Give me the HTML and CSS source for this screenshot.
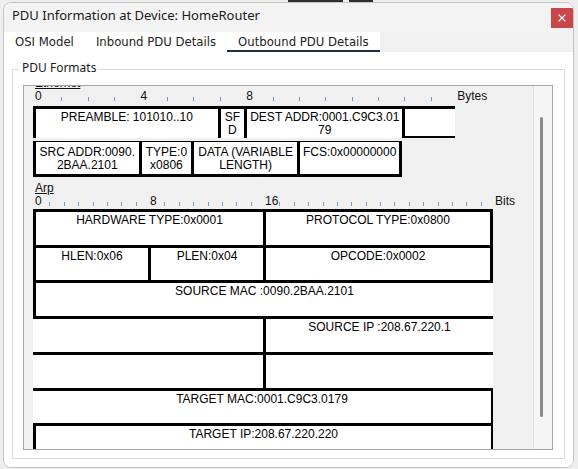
FILE: index.html
```html
<!DOCTYPE html>
<html>
<head>
<meta charset="utf-8">
<title>PDU Information</title>
<link rel="stylesheet" href="styles.css">
</head>
<body>
<div class="dialog">
  <div class="titlebar">
    <span class="title">PDU Information at Device: HomeRouter</span>
    <div class="close"><svg width="8" height="8" viewBox="0 0 8 8"><path d="M0.6 0.6L7.4 7.4M7.4 0.6L0.6 7.4" stroke="#fff" stroke-width="1.3" fill="none"/></svg></div>
  </div>
  <div class="tabbar">
    <div class="tabs">
      <div class="tab">OSI Model</div>
      <div class="tab">Inbound PDU Details</div>
      <div class="tab active">Outbound PDU Details</div>
    </div>
  </div>
  <div class="content">
    <fieldset class="group">
      <legend>PDU Formats</legend>
      <div class="panel">
        <div class="viewport">
          <div class="seclabel first">Ethernet</div>
          <div class="ruler r-eth">
            <span class="u">0</span><span class="u"><i></i></span><span class="u"><i></i></span><span class="u"><i></i></span>
            <span class="u">4</span><span class="u"><i></i></span><span class="u"><i></i></span><span class="u"><i></i></span>
            <span class="u">8</span><span class="u"><i></i></span><span class="u"><i></i></span><span class="u"><i></i></span>
            <span class="u"><i></i></span><span class="u"><i></i></span><span class="u"><i></i></span><span class="u"><i></i></span>
            <span class="u">Bytes</span>
          </div>
          <div class="pdu eth">
            <div class="cell s7 t3 l3">PREAMBLE: 101010..10</div>
            <div class="cell s1 t3 l3">SF<br>D</div>
            <div class="cell s6 t3 l3">DEST ADDR:0001.C9C3.01<br>79</div>
            <div class="cell s2 t3 l3 b2"></div>
            <div class="cell s4 t1 l3 b3">SRC ADDR:0090.<br>2BAA.2101</div>
            <div class="cell s2 t1 l3 b3">TYPE:0<br>x0806</div>
            <div class="cell s4 t1 l3 b3">DATA (VARIABLE<br>LENGTH)</div>
            <div class="cell s4 t1 l3 r3 b3">FCS:0x00000000</div>
          </div>
          <div class="seclabel">Arp</div>
          <div class="ruler r-arp">
            <span class="u">0</span><span class="u"><i></i></span><span class="u"><i></i></span><span class="u"><i></i></span>
            <span class="u"><i></i></span><span class="u"><i></i></span><span class="u"><i></i></span><span class="u"><i></i></span>
            <span class="u">8</span><span class="u"><i></i></span><span class="u"><i></i></span><span class="u"><i></i></span>
            <span class="u"><i></i></span><span class="u"><i></i></span><span class="u"><i></i></span><span class="u"><i></i></span>
            <span class="u">16</span><span class="u"><i></i></span><span class="u"><i></i></span><span class="u"><i></i></span>
            <span class="u"><i></i></span><span class="u"><i></i></span><span class="u"><i></i></span><span class="u"><i></i></span>
            <span class="u"><i></i></span><span class="u"><i></i></span><span class="u"><i></i></span><span class="u"><i></i></span>
            <span class="u"><i></i></span><span class="u"><i></i></span><span class="u"><i></i></span><span class="u"><i></i></span>
            <span class="u">Bits</span>
          </div>
          <div class="pdu arp">
            <div class="cell s16 t3 l3">HARDWARE TYPE:0x0001</div>
            <div class="cell s16 t3 l3 r3">PROTOCOL TYPE:0x0800</div>
            <div class="cell s8 t3 l3">HLEN:0x06</div>
            <div class="cell s8 t3 l3">PLEN:0x04</div>
            <div class="cell s16 t3 l3 r3">OPCODE:0x0002</div>
            <div class="cell s32 t3 l3">SOURCE MAC :0090.2BAA.2101</div>
            <div class="cell s16 t3"></div>
            <div class="cell s16 t3 l3">SOURCE IP :208.67.220.1</div>
            <div class="cell s16 t3"></div>
            <div class="cell s16 t3 l3"></div>
            <div class="cell s32 t3 r2">TARGET MAC:0001.C9C3.0179</div>
            <div class="cell s32 t3 l3 r2">TARGET IP:208.67.220.220</div>
          </div>
        </div>
        <div class="scrollbar"><div class="thumb"></div></div>
      </div>
    </fieldset>
  </div>
</div>
</body>
</html>
```
FILE: styles.css
```css
* { box-sizing: border-box; }

html, body {
  margin: 0;
  height: 100%;
}

body {
  overflow: hidden;
  font-family: "Liberation Sans", Arial, sans-serif;
  background:
    linear-gradient(#2e2e2e, #2e2e2e) 288px 0 / 55px 3px no-repeat,
    linear-gradient(#2e2e2e, #2e2e2e) 349px 0 / 24px 3px no-repeat,
    #eeeeee;
}

.dialog {
  margin: 2px 0 0 3px;
  width: 571px;
  height: 466px;
  border: 1px solid #c4c4c4;
  border-radius: 8px;
  background: #fff;
  overflow: hidden;
  display: flex;
  flex-direction: column;
}

.titlebar {
  flex: none;
  height: 29px;
  background: #f3f3f3;
  display: flex;
  align-items: flex-start;
  padding-left: 8px;
}

.title {
  font-family: "Noto Sans", sans-serif;
  font-size: 13px;
  line-height: 17px;
  color: #1a1a1a;
  padding-top: 4px;
  white-space: nowrap;
}

.close {
  margin-left: auto;
  margin-top: 5px;
  width: 22px;
  height: 20px;
  background: #c9474b;
  display: flex;
  align-items: center;
  justify-content: center;
}

.tabbar {
  flex: none;
  height: 20px;
  background: #f0f0f0;
  display: flex;
}

.tabs {
  display: flex;
  background: #fff;
}

.tab {
  font-family: "DejaVu Sans", sans-serif;
  font-size: 11.7px;
  line-height: 16px;
  color: #222;
  padding: 2px 11px 0;
  border-bottom: 2px solid transparent;
  white-space: nowrap;
}

.tab.active {
  border-bottom-color: #1e2d4d;
}

.content {
  flex: 1;
  background: #fff;
  padding: 8px 0 0 8px;
}

.group {
  margin: 0;
  padding: 0;
  width: 553px;
  border: 1px solid #dcdcdc;
}

.group legend {
  font-family: "Noto Sans", sans-serif;
  font-size: 12px;
  line-height: 16px;
  color: #1a1a1a;
  padding: 0 3px 2px;
  margin-left: 6px;
}

.panel {
  margin: 7px 0 8px 10px;
  width: 530px;
  height: 365px;
  border: 1px solid #a7a7a7;
  background: #f0f0f0;
  display: flex;
}

.viewport {
  flex: 1;
  overflow: hidden;
  padding-left: 9px;
  font-size: 12px;
  line-height: 13px;
  color: #000;
}

.scrollbar {
  flex: none;
  width: 19px;
  border-left: 1px solid #e2e2e2;
  background: #f5f5f5;
  padding-left: 6px;
}

.thumb {
  margin-top: 31px;
  width: 3px;
  height: 300px;
  border-radius: 2px;
  background: #8b8b8b;
}

.seclabel {
  height: 13px;
  padding-left: 2px;
  text-decoration: underline;
  color: #111;
  margin-top: 5px;
}

.seclabel.first {
  margin-top: -9px;
}

.ruler {
  display: flex;
  height: 13px;
  padding-left: 2px;
  color: #111;
}

.ruler .u {
  flex: 0 0 26.4px;
  display: flex;
  align-items: flex-end;
  white-space: nowrap;
}

.ruler.r-arp .u {
  flex-basis: 14.375px;
}

.ruler .u i {
  display: block;
  width: 1px;
  height: 4px;
  margin-bottom: 2px;
  background: #6a9fd6;
}

.pdu {
  display: grid;
  margin-top: 3px;
}

.pdu.eth {
  grid-template-columns: repeat(16, 26.4px);
  grid-template-rows: 32px 36px;
  row-gap: 3px;
}

.pdu.arp {
  margin-top: 1px;
  grid-template-columns: repeat(32, 14.375px);
  grid-template-rows: 36px 35px 36px 36px 36px 35px 36px;
}

.cell {
  background: #fff;
  text-align: center;
  border: 0 solid #000;
  padding-top: 2px;
}

.s1 { grid-column: span 1; }
.s2 { grid-column: span 2; }
.s4 { grid-column: span 4; }
.s6 { grid-column: span 6; }
.s7 { grid-column: span 7; }
.s8 { grid-column: span 8; }
.s16 { grid-column: span 16; }
.s32 { grid-column: span 32; }

.t3 { border-top-width: 3px; }
.t1 { border-top-width: 1px; padding-top: 4px; }
.l3 { border-left-width: 3px; }
.r3 { border-right-width: 3px; }
.r2 { border-right-width: 2px; }
.b3 { border-bottom-width: 3px; }
.b2 { border-bottom-width: 2px; }
```
